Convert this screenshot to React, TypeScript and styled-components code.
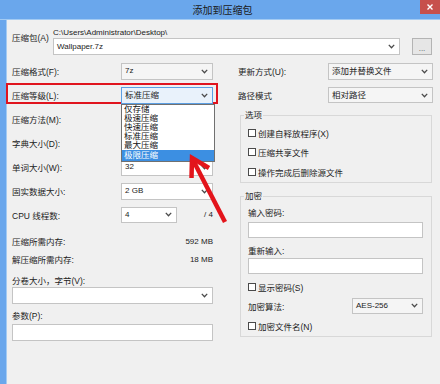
import React from "react";
import styled, { createGlobalStyle } from "styled-components";

const Global = createGlobalStyle`
  html, body { margin: 0; padding: 0; background: #f0f0f0; }
  body {
    width: 440px; height: 384px; overflow: hidden;
    font-family: "Liberation Sans", "Noto Sans CJK SC", sans-serif;
  }
  * { box-sizing: border-box; }
`;

const Window = styled.div`
  position: relative;
  width: 440px;
  height: 384px;
  display: flex;
  flex-direction: column;
  background: #6aa7ec;
  color: #1c1c1c;
  font-size: 8.5px;
  overflow: hidden;
`;

const TitleBar = styled.div`
  flex: none;
  height: 20px;
  display: grid;
  grid-template-columns: 1fr auto 1fr;
  border-bottom: 1px solid #a3cbf3;
`;

const Title = styled.div`
  font-family: "Noto Sans CJK SC", sans-serif;
  font-size: 10px;
  line-height: 19px;
  padding-left: 5px;
  color: #1a1a1a;
`;

const CloseButton = styled.div`
  justify-self: end;
  width: 20px;
  height: 14px;
  background: #c7504c;
  display: flex;
  align-items: center;
  justify-content: center;
`;

const Client = styled.div`
  flex: 1;
  margin-left: 6px;
  border-left: 1px solid #a3cbf3;
  background: #f0f0f0;
  padding: 8px 7px 0 5px;
`;

const ArchiveGrid = styled.div`
  display: grid;
  grid-template-columns: 41px 347px 12px 20px;
  grid-template-rows: 10px 17px;
`;

const ArchiveLabel = styled.div`
  grid-row: 1 / span 2;
  align-self: start;
  margin-top: 4px;
  line-height: 12px;
  white-space: nowrap;
`;

const PathText = styled.div`
  grid-column: 2 / span 3;
  font-size: 8px;
  line-height: 10px;
  white-space: nowrap;
  color: #222;
`;

const BrowseButton = styled.div`
  grid-column: 4;
  grid-row: 2;
  border: 1px solid #b4b4b4;
  background: #e6e6e6;
  display: flex;
  align-items: flex-end;
  justify-content: center;
  font-size: 8px;
  line-height: 11px;
  color: #555;
`;

const Columns = styled.div`
  margin-top: 4px;
  display: grid;
  grid-template-columns: 201px 195px;
  column-gap: 25px;
  align-items: start;
`;

const Column = styled.div`
  display: flex;
  flex-direction: column;
`;

const FieldRow = styled.div<{ $h: number; $label: number }>`
  position: relative;
  height: ${(p) => p.$h}px;
  display: grid;
  grid-template-columns: ${(p) => p.$label}px 1fr;
  align-items: center;
  white-space: nowrap;
`;

const Highlight = styled.div`
  position: absolute;
  top: 0;
  left: -6px;
  width: 212px;
  height: 21px;
  border: 2px solid #e0141e;
  pointer-events: none;
`;

const Select = styled.div<{ $w?: number; $edit?: boolean; $focus?: boolean; $h?: number }>`
  height: ${(p) => p.$h ?? 17}px;
  width: ${(p) => (p.$w ? `${p.$w}px` : "100%")};
  display: flex;
  align-items: center;
  justify-content: space-between;
  padding: 0 4px 0 3px;
  border: 1px solid ${(p) => (p.$focus ? "#5c9fe3" : "#c4c4c4")};
  background: ${(p) => (p.$edit ? "#ffffff" : p.$focus ? "#e9f2fb" : "#f5f5f5")};
  white-space: nowrap;
  line-height: 12px;
  color: #1c1c1c;
`;

const SelectWrap = styled.div`
  position: relative;
`;

const DropList = styled.div`
  position: absolute;
  z-index: 2;
  top: 17px;
  left: 0;
  width: 94px;
  background: #ffffff;
  border: 1px solid #707070;
  display: flex;
  flex-direction: column;
`;

const DropItem = styled.div<{ $active?: boolean }>`
  height: ${(p) => (p.$active ? 11 : 9)}px;
  line-height: ${(p) => (p.$active ? 11 : 9)}px;
  padding-left: 2px;
  font-size: 8.5px;
  background: ${(p) => (p.$active ? "#3c8fe2" : "transparent")};
  color: ${(p) => (p.$active ? "#ffffff" : "#111")};
`;

const CpuCell = styled.div`
  display: flex;
  align-items: center;
  justify-content: space-between;
`;

const Num = styled.span`
  font-size: 8px;
  color: #222;
`;

const InfoRow = styled.div<{ $mt?: number }>`
  height: 18px;
  margin-top: ${(p) => p.$mt ?? 0}px;
  display: flex;
  align-items: center;
  justify-content: space-between;
  white-space: nowrap;
`;

const BlockLabel = styled.div<{ $mt?: number }>`
  margin-top: ${(p) => p.$mt ?? 0}px;
  line-height: 12px;
  height: 12px;
  white-space: nowrap;
`;

const TextInput = styled.div<{ $mt?: number; $h?: number }>`
  margin-top: ${(p) => p.$mt ?? 0}px;
  height: ${(p) => p.$h ?? 17}px;
  border: 1px solid #c4c4c4;
  background: #ffffff;
`;

const Group = styled.fieldset<{ $mt?: number }>`
  margin: ${(p) => p.$mt ?? 0}px 1px 0 2px;
  padding: 0 8px 0 7px;
  border: 1px solid #d8d8d8;
  min-width: 0;
  display: flex;
  flex-direction: column;
`;

const Legend = styled.legend`
  margin-left: -4px;
  padding: 0 1px;
  line-height: 12px;
  height: 12px;
`;

const CheckRow = styled.div<{ $h: number; $mt?: number }>`
  height: ${(p) => p.$h}px;
  margin-top: ${(p) => p.$mt ?? 0}px;
  display: flex;
  align-items: center;
  gap: 2px;
  white-space: nowrap;
`;

const Box = styled.span`
  flex: none;
  width: 8px;
  height: 8px;
  border: 1px solid #4a4a4a;
  background: #ffffff;
`;

const AlgoRow = styled.div`
  height: 19px;
  display: flex;
  align-items: center;
  justify-content: space-between;
  white-space: nowrap;
`;

const Overlay = styled.svg`
  position: absolute;
  left: 0;
  top: 0;
  pointer-events: none;
  z-index: 5;
`;

const Chevron = () => (
  <svg width="7" height="5" viewBox="0 0 7 5">
    <polyline points="0.8,0.9 3.5,3.7 6.2,0.9" fill="none" stroke="#4a4a4a" strokeWidth="1.3" />
  </svg>
);

const levels = ["仅存储", "极速压缩", "快速压缩", "标准压缩", "最大压缩", "极限压缩"];

export default function App() {
  return (
    <>
      <Global />
      <Window>
        <TitleBar>
          <span />
          <Title>添加到压缩包</Title>
          <CloseButton>
            <svg width="6" height="6" viewBox="0 0 6 6">
              <path d="M0.5 0.5 L5.5 5.5 M5.5 0.5 L0.5 5.5" stroke="#ffffff" strokeWidth="1.4" />
            </svg>
          </CloseButton>
        </TitleBar>
        <Client>
          <ArchiveGrid>
            <ArchiveLabel>压缩包(A)</ArchiveLabel>
            <PathText>C:\Users\Administrator\Desktop\</PathText>
            <Select $edit style={{ gridColumn: 2, gridRow: 2 }}>
              <Num>Wallpaper.7z</Num>
              <Chevron />
            </Select>
            <BrowseButton>...</BrowseButton>
          </ArchiveGrid>

          <Columns>
            <Column>
              <FieldRow $h={24} $label={109}>
                <span>压缩格式(F):</span>
                <Select>
                  <Num>7z</Num>
                  <Chevron />
                </Select>
              </FieldRow>
              <FieldRow $h={24} $label={109}>
                <Highlight />
                <span>压缩等级(L):</span>
                <SelectWrap>
                  <Select $focus>
                    <span>标准压缩</span>
                    <Chevron />
                  </Select>
                  <DropList>
                    {levels.map((l, i) => (
                      <DropItem key={l} $active={i === levels.length - 1}>
                        {l}
                      </DropItem>
                    ))}
                  </DropList>
                </SelectWrap>
              </FieldRow>
              <FieldRow $h={24} $label={109}>
                <span>压缩方法(M):</span>
                <Select>
                  <span />
                  <Chevron />
                </Select>
              </FieldRow>
              <FieldRow $h={24} $label={109}>
                <span>字典大小(D):</span>
                <Select>
                  <span />
                  <Chevron />
                </Select>
              </FieldRow>
              <FieldRow $h={24} $label={109}>
                <span>单词大小(W):</span>
                <Select $edit>
                  <Num>32</Num>
                  <Chevron />
                </Select>
              </FieldRow>
              <FieldRow $h={24} $label={109}>
                <span>固实数据大小:</span>
                <Select $edit>
                  <Num>2 GB</Num>
                  <Chevron />
                </Select>
              </FieldRow>
              <FieldRow $h={23} $label={109}>
                <span>CPU 线程数:</span>
                <CpuCell>
                  <Select $edit $w={56} $h={16}>
                    <Num>4</Num>
                    <Chevron />
                  </Select>
                  <Num>/ 4</Num>
                </CpuCell>
              </FieldRow>
              <InfoRow $mt={6}>
                <span>压缩所需内存:</span>
                <Num>592 MB</Num>
              </InfoRow>
              <InfoRow>
                <span>解压缩所需内存:</span>
                <Num>18 MB</Num>
              </InfoRow>
              <BlockLabel $mt={7}>分卷大小，字节(V):</BlockLabel>
              <Select $edit>
                <span />
                <Chevron />
              </Select>
              <BlockLabel $mt={6}>参数(P):</BlockLabel>
              <TextInput $mt={2} />
            </Column>

            <Column>
              <FieldRow $h={24} $label={90}>
                <span>更新方式(U):</span>
                <Select>
                  <span>添加并替换文件</span>
                  <Chevron />
                </Select>
              </FieldRow>
              <FieldRow $h={24} $label={90}>
                <span>路径模式</span>
                <Select $h={16}>
                  <span>相对路径</span>
                  <Chevron />
                </Select>
              </FieldRow>
              <Group $mt={2}>
                <Legend>选项</Legend>
                <CheckRow $h={19} $mt={2}>
                  <Box />
                  <span>创建自释放程序(X)</span>
                </CheckRow>
                <CheckRow $h={19}>
                  <Box />
                  <span>压缩共享文件</span>
                </CheckRow>
                <CheckRow $h={21}>
                  <Box />
                  <span>操作完成后删除源文件</span>
                </CheckRow>
              </Group>
              <Group $mt={7}>
                <Legend>加密</Legend>
                <BlockLabel $mt={5}>输入密码:</BlockLabel>
                <TextInput $mt={3} $h={16} />
                <BlockLabel $mt={7}>重新输入:</BlockLabel>
                <TextInput $mt={1} $h={16} />
                <CheckRow $h={18} $mt={4}>
                  <Box />
                  <span>显示密码(S)</span>
                </CheckRow>
                <AlgoRow>
                  <span>加密算法:</span>
                  <Select $w={71} $h={16}>
                    <Num>AES-256</Num>
                    <Chevron />
                  </Select>
                </AlgoRow>
                <CheckRow $h={21}>
                  <Box />
                  <span>加密文件名(N)</span>
                </CheckRow>
              </Group>
            </Column>
          </Columns>
        </Client>

        <Overlay width="440" height="384" viewBox="0 0 440 384">
          <line x1="225" y1="222" x2="194" y2="162" stroke="#e3141b" strokeWidth="4.5" />
          <polyline
            points="191.5,178 192,158 209,168"
            fill="none"
            stroke="#e3141b"
            strokeWidth="4.5"
            strokeLinejoin="miter"
          />
        </Overlay>
      </Window>
    </>
  );
}
